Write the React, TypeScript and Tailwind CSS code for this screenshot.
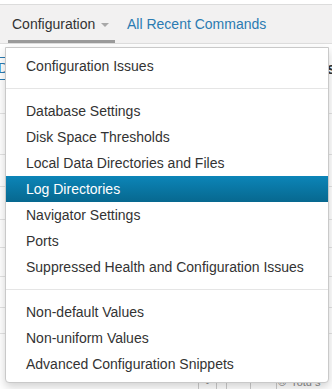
import { useState } from "react";

const GROUPS: string[][] = [
  ["Configuration Issues"],
  [
    "Database Settings",
    "Disk Space Thresholds",
    "Local Data Directories and Files",
    "Log Directories",
    "Navigator Settings",
    "Ports",
    "Suppressed Health and Configuration Issues",
  ],
  ["Non-default Values", "Non-uniform Values", "Advanced Configuration Snippets"],
];

const ROW_LINES = [118, 159, 191, 224, 252, 281, 312, 338];

const App = () => {
  const [active] = useState("Log Directories");

  return (
    <div
      className="relative w-[332px] h-[389px] overflow-hidden bg-white text-[14px] text-[#333]"
      style={{ fontFamily: '"Liberation Sans", Arial, sans-serif' }}
    >
      {/* Tabs bar */}
      <div className="mt-[4px] border-t border-[#dcdcdc] bg-[#f2f1f1] border-b border-b-[#dedede] h-[40px] flex items-stretch">
        <div className="ml-[8px] w-[107px] flex items-center pl-[4px] border-b-[3px] border-[#9a9a9a] pt-[4px]">
          <span>Configuration</span>
          <span className="ml-[6px] mt-[1px] w-0 h-0 border-l-[4px] border-r-[4px] border-t-[4px] border-l-transparent border-r-transparent border-t-[#a8a8a8]" />
        </div>
        <div className="ml-[12px] flex items-center pt-[1px] text-[#2b7bb2]">All Recent Commands</div>
      </div>

      {/* page content behind the menu */}
      <div className="relative">
        <div className="flex items-center justify-between h-[45px] pt-[4px]">
          <span className="-ml-[6px] px-[3px] border border-[#2b7bb2] text-[#2b7bb2]">D</span>
          <span className="font-bold text-[16px] text-[#333] -mr-[4px]">s</span>
        </div>
        {ROW_LINES.map((y) => (
          <div
            key={y}
            className="absolute left-0 right-0 h-px bg-[#e3e3e3]"
            style={{ top: y - 49 }}
          />
        ))}
        <div className="absolute top-[330px] left-[198px] flex h-[20px] text-[11px] text-[#888]">
          <div className="w-[18px] border-l border-[#ccc] text-center">•</div>
          <div className="w-[10px] border-l border-[#ccc]" />
          <div className="w-[24px] border-l border-[#ccc]" />
          <div className="w-[26px] border-l border-[#ccc]" />
          <div className="w-[14px] border-l border-[#ccc] pl-[1px]">®</div>
          <div className="pl-[3px]">rotu s</div>
        </div>
      </div>

      {/* Dropdown menu */}
      <div className="absolute left-[5px] top-[47px] w-[324px] bg-white border border-[#c9c9c9] rounded-b-[4px] shadow-[0_4px_10px_rgba(0,0,0,0.18)] py-[5px]">
        {GROUPS.map((group, gi) => (
          <div key={gi}>
            {gi > 0 && <div className="my-[9px] h-px bg-[#e5e5e5]" />}
            {group.map((item) => (
              <div
                key={item}
                className={
                  item === active
                    ? "h-[26px] pt-[1px] leading-[25px] px-[20px] text-white bg-gradient-to-b from-[#0c85b8] to-[#07688f]"
                    : "h-[26px] pt-[1px] leading-[25px] px-[20px] text-[#333] whitespace-nowrap"
                }
              >
                {item}
              </div>
            ))}
          </div>
        ))}
      </div>
    </div>
  );
};

export default App;
